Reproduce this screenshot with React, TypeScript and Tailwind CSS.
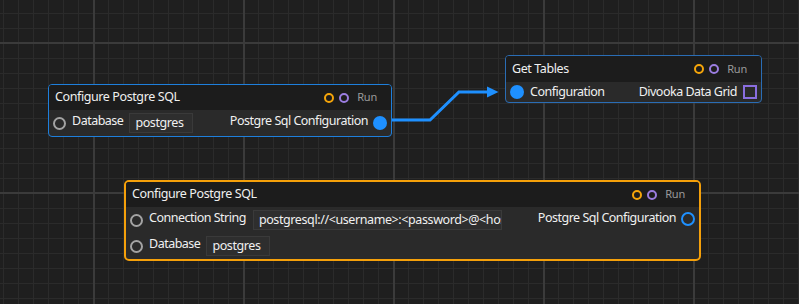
import React from "react";

type Pin = "ring" | "dot" | "hollow" | "square";

const PinIcon = ({kind}: { kind: Pin }) => {
  if (kind === "ring") {
    return <span className="block w-[13px] h-[13px] rounded-full border-2 border-[#a3a3a3] shrink-0"/>;
  }
  if (kind === "dot") {
    return <span className="block w-[14px] h-[14px] rounded-full bg-[#1e90ff] shrink-0"/>;
  }
  if (kind === "hollow") {
    return <span className="block w-[14px] h-[14px] rounded-full border-2 border-[#1e90ff] shrink-0"/>;
  }
  return <span className="block w-[14px] h-[14px] border-2 border-[#8a6ee0] bg-[#2a2a2a] shrink-0"/>;
};

const Header = ({title, height}: { title: string; height: string }) => (
  <div className={`${height} bg-[#1c1c1c] flex items-center pl-[6px] pr-[14px]`}>
    <span className="text-[12.5px] tracking-[-0.4px] text-[#f0f0f0]">{title}</span>
    <span className="ml-auto w-[10px] h-[10px] rounded-full border-2 border-[#f5a50a]"/>
    <span className="ml-[5px] w-[10px] h-[10px] rounded-full border-2 border-[#9b7de0]"/>
    <span className="ml-[8px] text-[11px] tracking-[-0.2px] text-[#9a9a9a]">Run</span>
  </div>
);

const InputBox = ({value, width}: { value: string; width: string }) => (
  <div
    className={`${width} shrink-0 h-[20px] bg-[#2e2e2e] border border-[#3a3a3a] px-[5px] text-[12.5px] tracking-[-0.4px] leading-[18px] text-[#f0f0f0] overflow-hidden whitespace-nowrap`}>
    {value}
  </div>
);

const Label = ({children, className = ""}: { children: React.ReactNode; className?: string }) => (
  <span className={`text-[12.5px] tracking-[-0.5px] text-[#f0f0f0] whitespace-nowrap ${className}`}>{children}</span>
);

const App = () => {
  return (
    <div
      className="relative w-full h-[304px] overflow-hidden bg-[#1f1f1f] [font-family:'Noto_Sans',sans-serif] [background-image:linear-gradient(to_right,#3b3b3b_2px,transparent_2px),linear-gradient(to_bottom,#3b3b3b_2px,transparent_2px),linear-gradient(to_right,#2b2b2b_1px,transparent_1px),linear-gradient(to_bottom,#2b2b2b_1px,transparent_1px)] [background-size:150px_150px,150px_150px,15px_15px,15px_15px] [background-position:93px_0,0_42px,3px_0,0_13px]">
      <svg className="absolute inset-0" width="799" height="304">
        <path d="M388 120 H430 L459 92 H490" fill="none" stroke="#1e90ff" strokeWidth="3"/>
        <polygon points="487,86.5 498.5,92 487,97.5" fill="#1e90ff"/>
      </svg>

      {/* Configure Postgre SQL (small) */}
      <div
        className="absolute left-[48px] top-[84px] w-[344px] rounded-[4px] border border-[#1e7fdc] bg-[#2a2a2a] overflow-hidden">
        <Header title="Configure Postgre SQL" height="h-[25px]"/>
        <div className="h-[26px] flex items-center pl-[4px] pr-[4px]">
          <PinIcon kind="ring"/>
          <Label className="ml-[6px] mb-[3px]">Database</Label>
          <div className="ml-[6px]">
            <InputBox value="postgres" width="w-[64px]"/>
          </div>
          <Label className="ml-auto mb-[3px]">Postgre Sql Configuration</Label>
          <span className="ml-[5px]"><PinIcon kind="dot"/></span>
        </div>
      </div>

      {/* Get Tables */}
      <div
        className="absolute left-[505px] top-[55px] w-[257px] rounded-[4px] border border-[#2a6db5] bg-[#2a2a2a] overflow-hidden">
        <Header title="Get Tables" height="h-[26px]"/>
        <div className="h-[20px] flex items-center pl-[4px] pr-[4px]">
          <PinIcon kind="dot"/>
          <Label className="ml-[6px]">Configuration</Label>
          <Label className="ml-auto">Divooka Data Grid</Label>
          <span className="ml-[6px]"><PinIcon kind="square"/></span>
        </div>
      </div>

      {/* Configure Postgre SQL (selected) */}
      <div
        className="absolute left-[124px] top-[180px] w-[577px] rounded-[5px] border-2 border-[#f5a00a] bg-[#2a2a2a] overflow-hidden">
        <Header title="Configure Postgre SQL" height="h-[25px]"/>
        <div className="flex items-start pl-[4px] pr-[4px] pt-[3px] pb-[3px]">
          <div className="flex flex-col gap-[6px] shrink-0">
            <div className="h-[20px] flex items-center">
              <PinIcon kind="ring"/>
              <Label className="ml-[6px] mb-[3px]">Connection String</Label>
              <div className="ml-[7px]">
                <InputBox value="postgresql://<username>:<password>@<host>" width="w-[249px]"/>
              </div>
            </div>
            <div className="h-[20px] flex items-center">
              <PinIcon kind="ring"/>
              <Label className="ml-[6px] mb-[3px]">Database</Label>
              <div className="ml-[6px]">
                <InputBox value="postgres" width="w-[64px]"/>
              </div>
            </div>
          </div>
          <div className="ml-auto h-[20px] flex items-center shrink-0">
            <Label className="mb-[3px]">Postgre Sql Configuration</Label>
            <span className="ml-[5px] mb-[3px]"><PinIcon kind="hollow"/></span>
          </div>
        </div>
      </div>
    </div>
  );
};

export default App;
